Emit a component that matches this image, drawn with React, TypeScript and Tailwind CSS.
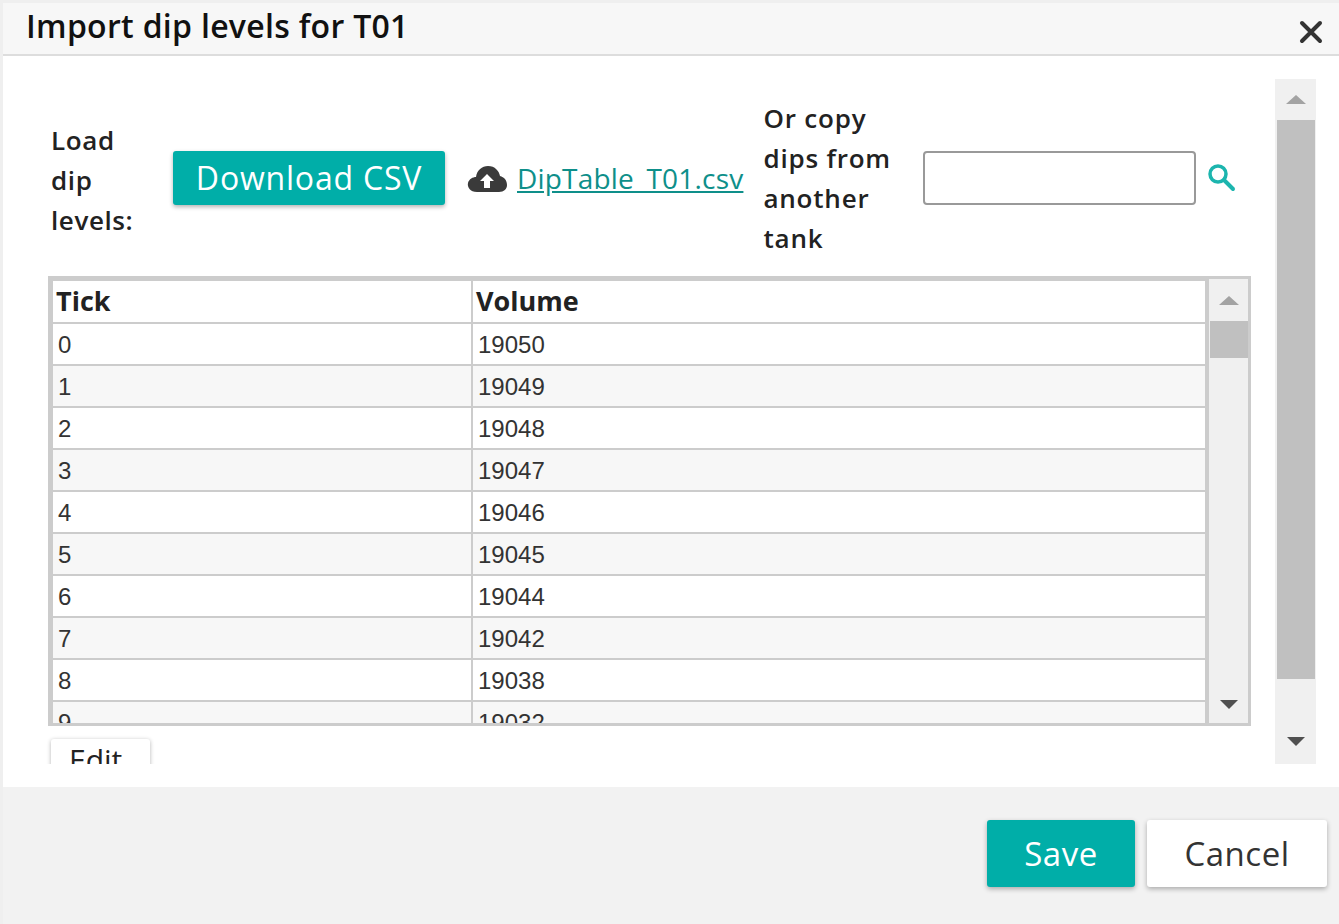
import React from "react";

const rows = [
  [0, 19050], [1, 19049], [2, 19048], [3, 19047], [4, 19046], [5, 19045],
  [6, 19044], [7, 19042], [8, 19038], [9, 19032], [10, 19025],
];

const F = { fontFamily: '"Open Sans", "Noto Sans", sans-serif' };

export default function App() {
  return (
    <div className="w-[1339px] h-[924px] bg-[#efefef] pt-[3px] pl-[3px] overflow-hidden text-[#222]" style={F}>
      <div className="h-[53px] bg-[#f7f7f7] border-b-2 border-[#dddddd] flex items-center justify-between pl-[23px] pr-[16px]">
        <div className="text-[32px] font-semibold text-[#111] leading-none -mt-[6px] tracking-[0.3px]">Import dip levels for T01</div>
        <svg width="24" height="24" viewBox="0 0 24 24" className="mt-[6px]">
          <path d="M3 3 L21 21 M21 3 L3 21" stroke="#333" strokeWidth="4" strokeLinecap="round" />
        </svg>
      </div>
      <div className="h-[731px] bg-white pt-[23px] flex">
        <div className="w-[1272px] h-[685px] overflow-hidden pl-[45px]">
          <div className="flex items-center h-[197px]">
            <div className="w-[125px] pl-[3px] text-[26px] font-semibold leading-[40px] text-[#222] pt-[4px] tracking-[0.6px]">Load<br />dip<br />levels:</div>
            <button className="h-[54px] w-[272px] bg-[#00aea8] text-white text-[32px] font-medium rounded-[3px] shadow-[0_2px_4px_rgba(0,0,0,0.3)] leading-none tracking-[0.8px]">Download CSV</button>
            <svg width="40" height="30" viewBox="0 0 40 30" className="ml-[22px] mt-[2px]">
              <path d="M10 28 C3 28 0 23 1 19 C2 15 6 13 9 13 C10 6 15 2 21 2 C28 2 32 7 33 12 C37 13 40 16 40 21 C40 25 37 28 32 28 Z" fill="#3a3a3a" />
              <path d="M20 10 L27 17 L23 17 L23 24 L17 24 L17 17 L13 17 Z" fill="#fff" />
            </svg>
            <a className="ml-[10px] text-[28px] text-[#0e8f8a] underline font-medium tracking-[0.2px]">DipTable_T01.csv</a>
            <div className="ml-[20px] w-[160px] text-[26px] font-semibold leading-[40px] text-[#222] tracking-[0.8px]">Or copy<br />dips from<br />another<br />tank</div>
            <input className="w-[273px] h-[54px] border-2 border-[#999] rounded-[4px] outline-none" />
            <svg width="32" height="32" viewBox="0 0 32 32" className="ml-[10px]">
              <circle cx="12" cy="12" r="8" fill="none" stroke="#1cb5ae" strokeWidth="3.5" />
              <path d="M18 18 L27 27" stroke="#1cb5ae" strokeWidth="4" strokeLinecap="round" />
            </svg>
          </div>
          <div className="w-[1203px] h-[450px] border-[3px] border-[#cccccc] flex bg-[#f0f0f0]" style={{ fontFamily: '"Liberation Sans", Arial, sans-serif' }}>
            <div className="w-[1156px] overflow-hidden bg-white">
              <table className="border-collapse w-full">
                <thead>
                  <tr className="h-[42px]">
                    <th className="w-[420px] text-left font-bold text-[27px] px-[3px] border-2 border-[#cccccc]" style={F}>Tick</th>
                    <th className="text-left font-bold text-[27px] px-[3px] border-2 border-[#cccccc]" style={F}>Volume</th>
                  </tr>
                </thead>
                <tbody>
                  {rows.map(([t, v], i) => (
                    <tr key={t} className={`h-[42px] ${i % 2 ? "bg-[#f7f7f7]" : "bg-white"}`}>
                      <td className="text-[24px] px-[5px] text-[#333] border-2 border-[#cccccc] pt-[2px]">{t}</td>
                      <td className="text-[24px] px-[5px] text-[#333] border-2 border-[#cccccc] pt-[2px]">{v}</td>
                    </tr>
                  ))}
                </tbody>
              </table>
            </div>
            <div className="w-[41px] flex flex-col items-center bg-[#f0f0f0] border-l-2 border-[#cccccc]">
              <div className="h-[42px] flex items-center justify-center">
                <div className="w-0 h-0 border-l-[10px] border-r-[10px] border-b-[9px] border-l-transparent border-r-transparent border-b-[#a3a3a3]" />
              </div>
              <div className="w-[38px] h-[37px] bg-[#c0c0c0]" />
              <div className="flex-1" />
              <div className="h-[38px] flex items-center justify-center">
                <div className="w-0 h-0 border-l-[9px] border-r-[9px] border-t-[9px] border-l-transparent border-r-transparent border-t-[#505050]" />
              </div>
            </div>
          </div>
          <button className="mt-[13px] ml-[3px] w-[99px] h-[60px] bg-white rounded-[3px] shadow-[0_1px_4px_rgba(0,0,0,0.3)] text-[30px] text-[#222] text-left pl-[18px] leading-none pt-[6px] self-start flex items-start">Edit</button>
        </div>
        <div className="w-[41px] h-[685px] bg-[#f0f0f0] flex flex-col items-center">
          <div className="h-[41px] flex items-center justify-center">
            <div className="w-0 h-0 border-l-[10px] border-r-[10px] border-b-[9px] border-l-transparent border-r-transparent border-b-[#a3a3a3]" />
          </div>
          <div className="w-[38px] h-[559px] bg-[#c0c0c0]" />
          <div className="flex-1 flex items-end justify-center pb-[18px]">
            <div className="w-0 h-0 border-l-[9px] border-r-[9px] border-t-[9px] border-l-transparent border-r-transparent border-t-[#505050]" />
          </div>
        </div>
      </div>
      <div className="h-[137px] bg-[#f2f2f2] flex justify-end items-start pt-[33px] pr-[12px] gap-[12px]">
        <button className="w-[148px] h-[67px] bg-[#00aea8] text-white text-[33px] font-medium rounded-[3px] shadow-[0_2px_5px_rgba(0,0,0,0.3)] tracking-[0.5px]">Save</button>
        <button className="w-[180px] h-[67px] bg-white text-[#333] text-[33px] font-medium rounded-[3px] shadow-[0_2px_5px_rgba(0,0,0,0.3)] tracking-[0.5px]">Cancel</button>
      </div>
    </div>
  );
}
